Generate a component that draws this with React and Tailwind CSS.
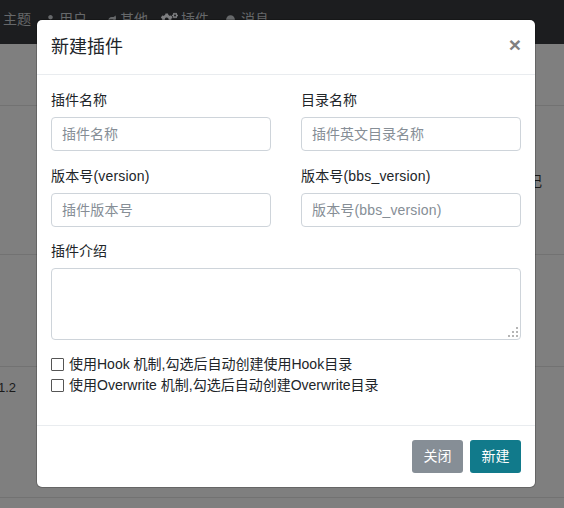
import { FaUser, FaLeaf, FaCogs, FaCircle } from 'react-icons/fa';

const font = { fontFamily: '"Liberation Sans", "Noto Sans CJK SC", sans-serif' };

function Field({ label, placeholder, wide }) {
  return (
    <div className="w-[220px]">
      <label className={`block h-[21px] leading-[21px] text-[14px] text-[#212529] mb-[6px] ${wide ? 'tracking-[0.17px]' : ''}`}>{label}</label>
      <input
        placeholder={placeholder}
        className={`block w-full h-[34px] px-[10px] text-[14px] bg-white border border-[#ced4da] rounded-[4px] placeholder:text-[#868e96] ${wide ? 'tracking-[0.17px]' : ''}`}
      />
    </div>
  );
}

function Check({ label }) {
  return (
    <label className="flex items-center h-[21px] text-[14px] text-[#212529]">
      <span className="w-[13px] h-[13px] border border-[#555] rounded-[1px] bg-white mr-[5px]" />
      {label}
    </label>
  );
}

export default function App() {
  return (
    <div className="relative w-[564px] h-[508px] overflow-hidden bg-[#7f7f7f]" style={font}>
      {/* page behind the backdrop */}
      <div className="h-[44px] bg-[#1c1d1f] flex items-center pl-[3px] pb-[5px] text-[14px] text-[#66686a]">
        <span>主题</span>
        <FaUser size={9} className="ml-[15px] mr-[4px]" />
        <span>用户</span>
        <FaLeaf size={9} className="ml-[20px] mr-[4px]" />
        <span>其他</span>
        <FaCogs size={17} className="ml-[13px] mr-[3px] text-[#7d7e80]" />
        <span>插件</span>
        <FaCircle size={9} className="ml-[17px] mr-[6px]" />
        <span>消息</span>
      </div>
      <div className="h-[62px] border-b border-[#727272]" />
      <div className="h-[149px] border-b border-[#727272]" />
      <div className="h-[112px] border-b border-[#727272]" />
      <div className="h-[131px] border-b border-[#727272]" />
      <span className="absolute left-[-2px] top-[378px] text-[13px] text-[#1a1a1a]">1.2</span>
      <span className="absolute left-[528px] top-[171px] text-[14px] text-[#1a1a1a]">记</span>

      {/* modal */}
      <div className="absolute left-[37px] top-[20px] w-[498px] h-[467px] bg-white rounded-[5px] shadow-[0_0_0_1px_rgba(0,0,0,0.2)] flex flex-col">
        <div className="h-[55px] flex items-center justify-between px-[14px] border-b border-[#e9ecef]">
          <h5 className="text-[18px] text-[#212529]">新建插件</h5>
          <span className="text-[21px] font-bold leading-none text-[#808080] -mt-[5px]">×</span>
        </div>
        <div className="flex-1 px-[14px] pt-[15px]">
          <div className="flex justify-between mb-[15px]">
            <Field label="插件名称" placeholder="插件名称" />
            <Field label="目录名称" placeholder="插件英文目录名称" />
          </div>
          <div className="flex justify-between mb-[14px]">
            <Field label="版本号(version)" placeholder="插件版本号" wide />
            <Field label="版本号(bbs_version)" placeholder="版本号(bbs_version)" wide />
          </div>
          <label className="block h-[21px] leading-[21px] text-[14px] text-[#212529] mb-[6px]">插件介绍</label>
          <div className="relative mb-[14px]">
            <textarea className="block w-[470px] h-[72px] border border-[#ced4da] rounded-[4px] resize-none" />
            <svg width="10" height="10" viewBox="0 0 10 10" className="absolute right-[3px] bottom-[3px] text-[#b5b5b5]" fill="currentColor">
              <rect x="8" y="0" width="2" height="2" />
              <rect x="4" y="4" width="2" height="2" />
              <rect x="8" y="4" width="2" height="2" />
              <rect x="0" y="8" width="2" height="2" />
              <rect x="4" y="8" width="2" height="2" />
              <rect x="8" y="8" width="2" height="2" />
            </svg>
          </div>
          <Check label="使用Hook 机制,勾选后自动创建使用Hook目录" />
          <Check label="使用Overwrite 机制,勾选后自动创建Overwrite目录" />
        </div>
        <div className="h-[62px] flex items-center justify-end gap-[7px] pr-[14px] border-t border-[#e9ecef]">
          <button className="w-[51px] h-[33px] rounded-[3px] bg-[#868e96] text-white text-[14px]">关闭</button>
          <button className="w-[51px] h-[33px] rounded-[3px] bg-[#117a8b] text-white text-[14px]">新建</button>
        </div>
      </div>
    </div>
  );
}
